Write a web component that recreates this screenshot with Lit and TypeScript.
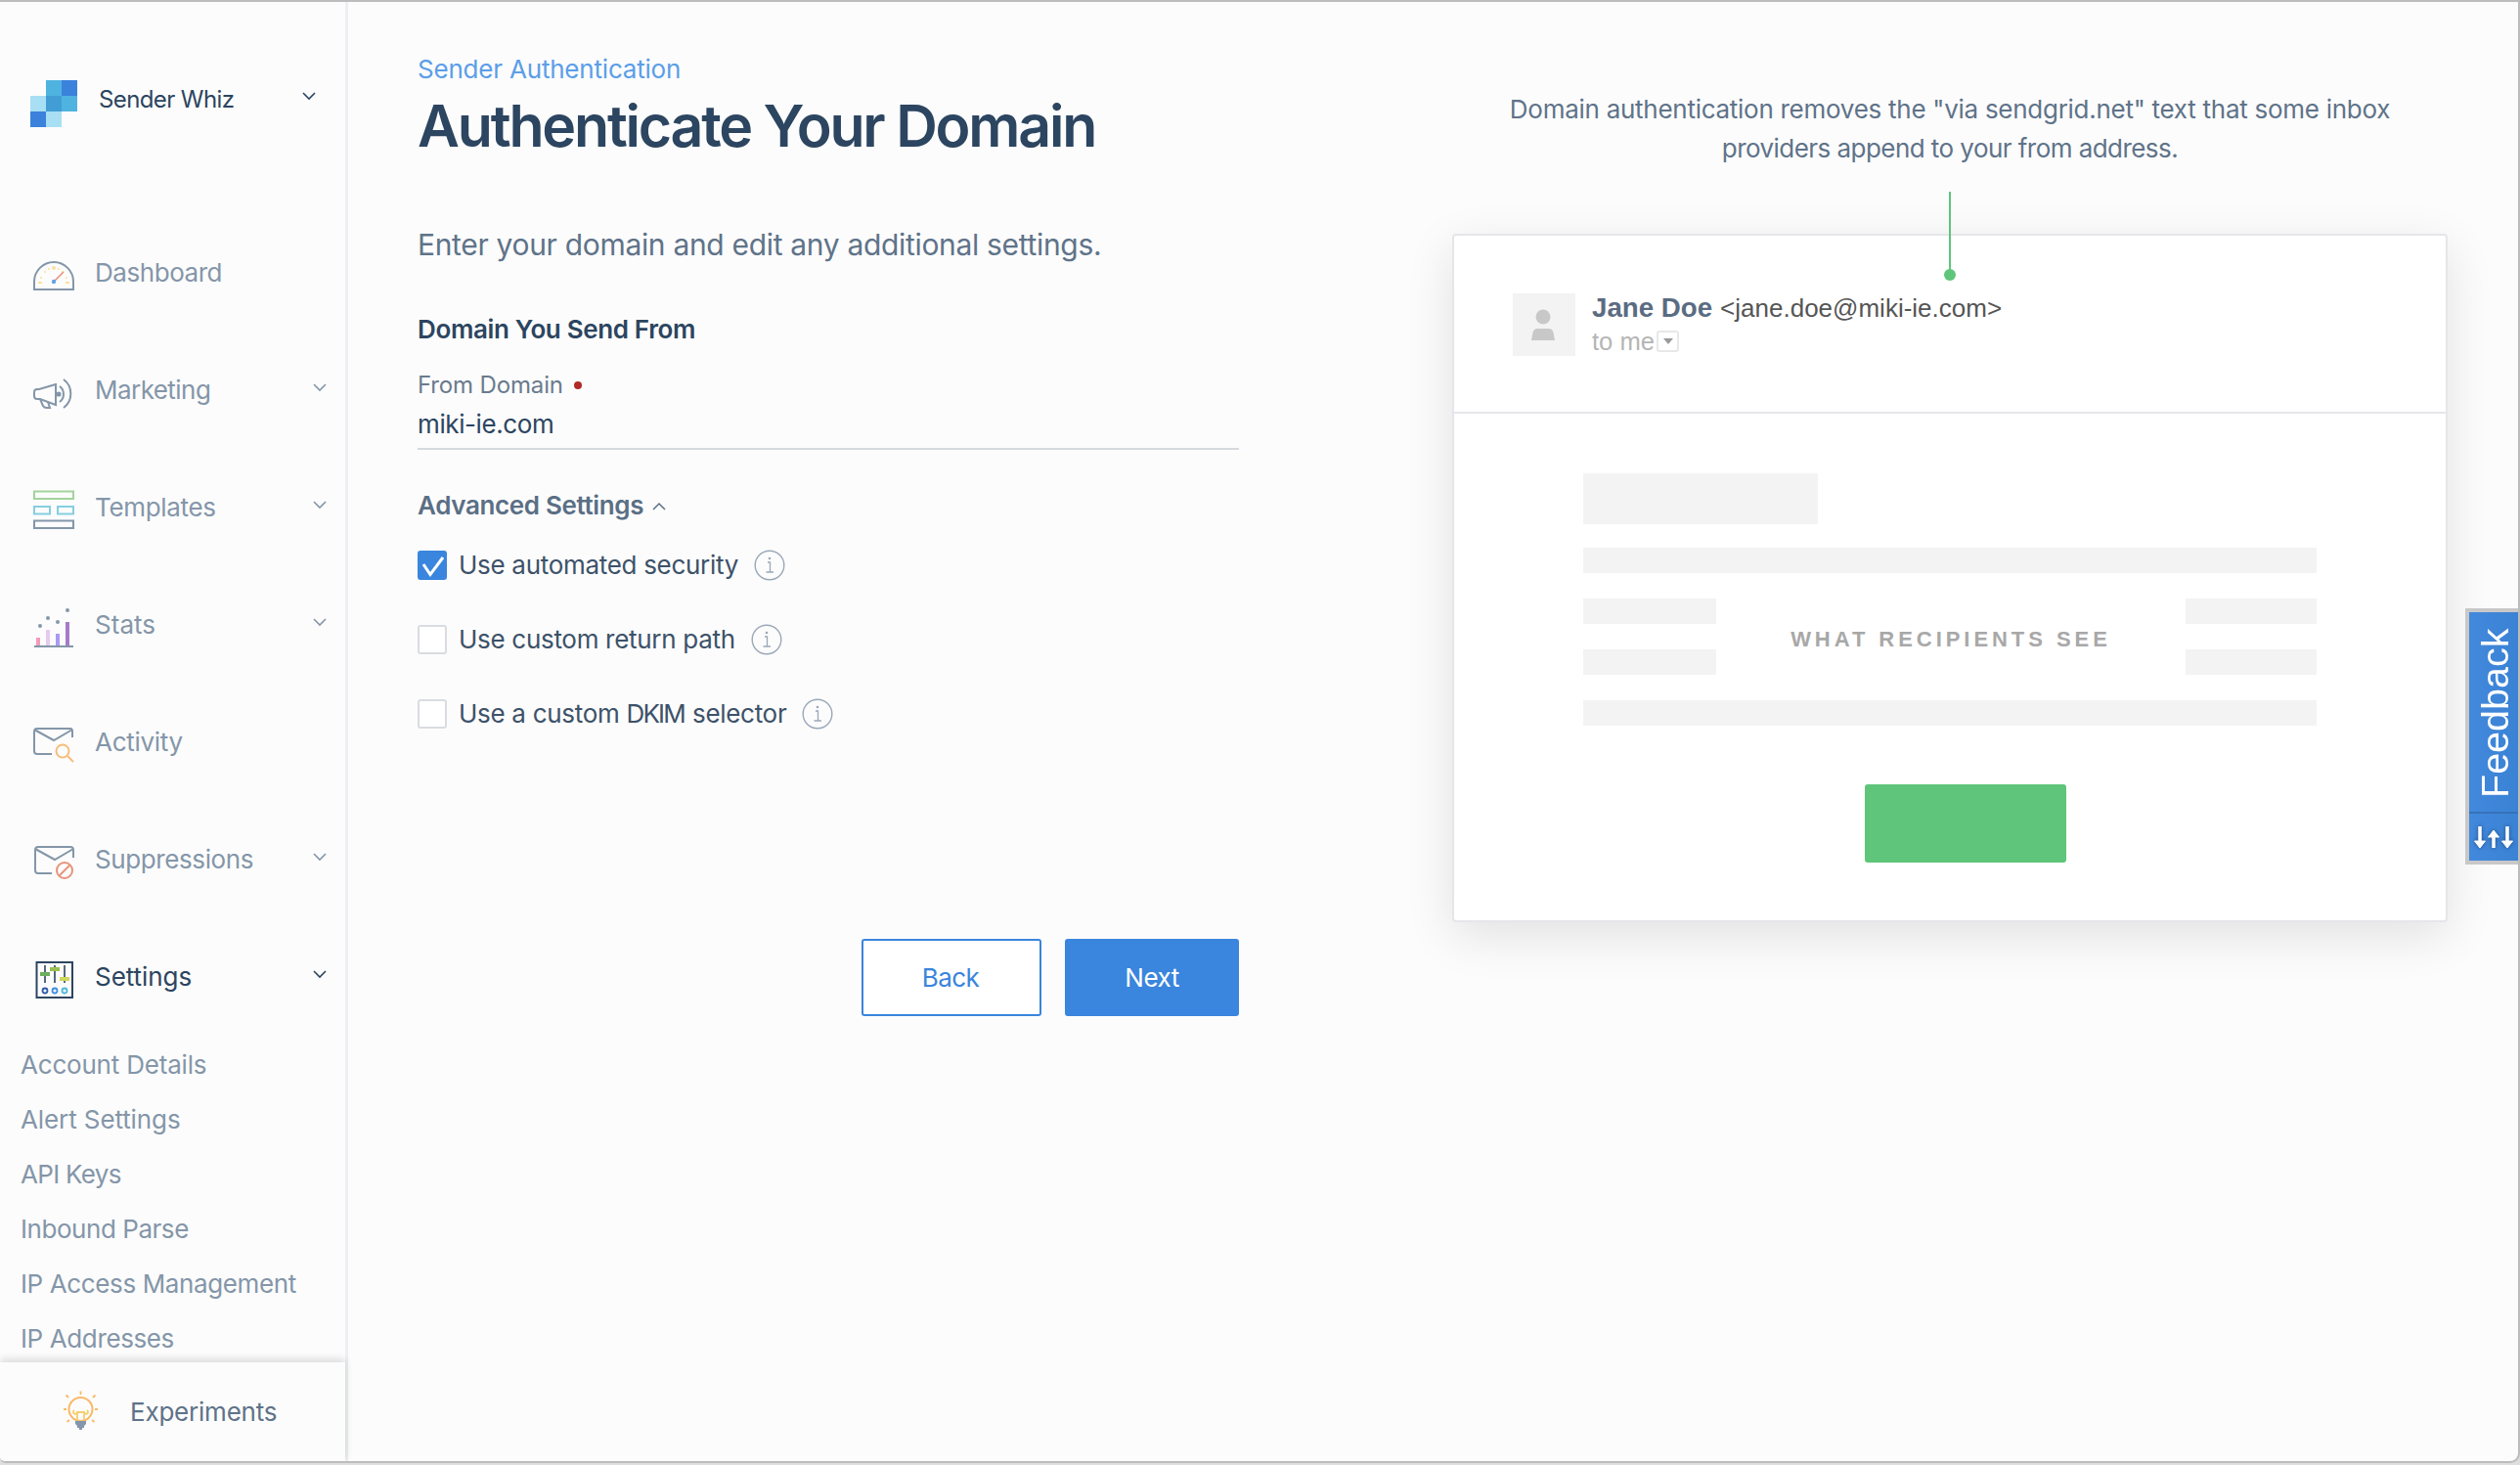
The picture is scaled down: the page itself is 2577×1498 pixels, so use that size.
import { LitElement, html, css, svg } from "lit";
import { customElement } from "lit/decorators.js";

const chev = html`<svg class="chev" viewBox="0 0 14 9"><path d="M1 1l6 6 6-6" fill="none" stroke="currentColor" stroke-width="1.6"/></svg>`;
const G = "#8496a9";

const icons: Record<string, unknown> = {
  dash: svg`<svg viewBox="33 254 44 50" class="ic">
    <path d="M35 296v-8a20 20 0 0 1 40 0v8z" fill="none" stroke="${G}" stroke-width="2"/>
    <g fill="#fbe29a"><circle cx="55" cy="274" r="2"/><circle cx="46" cy="278" r="1"/><circle cx="64" cy="278" r="1"/><circle cx="50" cy="275" r="1"/><circle cx="60" cy="275" r="1"/><circle cx="42" cy="284" r="1"/><circle cx="68" cy="284" r="1"/><rect x="39" y="288" width="4" height="2"/><rect x="67" y="288" width="4" height="2"/></g>
    <path d="M55 288l10-10" stroke="#e8937c" stroke-width="1.6"/><circle cx="55" cy="288" r="2.2" fill="#64a4e4"/></svg>`,
  mkt: svg`<svg viewBox="33 374 44 50" class="ic"><g fill="none" stroke="${G}" stroke-width="2">
    <path d="M57 393l-17 5h-2a3 3 0 0 0-3 3v4a3 3 0 0 0 3 3h3l16 6z"/><path d="M41 408l3 7q1 2 4 2h3l-2-6"/>
    <path d="M61 395a10 10 0 0 1 0 16"/><path d="M65 388a18 18 0 0 1 0 29"/></g><circle cx="60" cy="403" r="2.6" fill="${G}"/></svg>`,
  tpl: svg`<svg viewBox="33 495 44 50" class="ic"><g fill="none" stroke-width="2">
    <rect x="35" y="503.500" width="40" height="7.500" stroke="#a3d39c"/>
    <rect x="35" y="519" width="16" height="7.500" stroke="#86cfe0"/><rect x="59" y="519" width="16" height="7.500" stroke="#86cfe0"/>
    <rect x="35" y="533.500" width="40" height="7.500" stroke="${G}"/></g></svg>`,
  stats: svg`<svg viewBox="33 614 44 50" class="ic">
    <rect x="37" y="652" width="4" height="9" fill="#f59ab8"/><rect x="47" y="644" width="4" height="17" fill="#e6c9ef"/><rect x="57" y="648" width="4" height="13" fill="#a99af5"/><rect x="67" y="636" width="4" height="25" fill="#a67ac8"/>
    <path d="M35 661h40" stroke="${G}" stroke-width="2"/>
    <g fill="${G}"><circle cx="41" cy="640" r="2"/><circle cx="49" cy="632" r="2"/><circle cx="59" cy="636" r="2"/><circle cx="69" cy="624" r="2"/></g></svg>`,
  act: svg`<svg viewBox="33 734 44 50" class="ic"><g fill="none">
    <path d="M53 771H38q-3 0-3-3v-20q0-3 3-3h34q2 0 2 3v6M35 746l20 11 19-11" stroke="${G}" stroke-width="2"/>
    <circle cx="64" cy="768" r="6.500" stroke="#f7bd7c" stroke-width="2"/><path d="M69 773l6 6" stroke="#f7bd7c" stroke-width="2"/></g></svg>`,
  sup: svg`<svg viewBox="33 854 44 50" class="ic"><g fill="none">
    <path d="M53 893H39q-3 0-3-3v-21q0-3 3-3h33q3 0 3 3v8M36 868l20 11 19-11" stroke="${G}" stroke-width="2"/>
    <circle cx="66" cy="890" r="8" stroke="#e8937c" stroke-width="2"/><path d="M60.500 895.500l11-11" stroke="#e8937c" stroke-width="2"/></g></svg>`,
  set: svg`<svg viewBox="33 974 44 50" class="ic">
    <rect x="37.500" y="984" width="36.500" height="36" fill="none" stroke="#2c4560" stroke-width="2"/>
    <path d="M46 987v18M56 987v18M66 987v18" stroke="#2c4560" stroke-width="1.600"/>
    <rect x="41" y="994" width="10" height="4" fill="#6fae5c"/><rect x="51" y="989" width="10" height="4" fill="#97bf4e"/><rect x="61" y="999" width="10" height="4" fill="#cfd85a"/>
    <circle cx="46" cy="1013" r="2.500" fill="none" stroke="#2f5aa8" stroke-width="1.800"/><circle cx="56" cy="1013" r="2.500" fill="none" stroke="#3d8fe0" stroke-width="1.800"/><circle cx="66" cy="1013" r="2.500" fill="none" stroke="#4fb8d8" stroke-width="1.800"/></svg>`,
};

const bulb = svg`<svg class="bulb" viewBox="64 1419 37 43"><g fill="none">
  <circle cx="82.500" cy="1438" r="12" stroke="#f8b968" stroke-width="2"/>
  <path d="M82.500 1423v-3.500M70 1426l-2.500-2.500M95 1426l2.500-2.500M65 1438h3M97 1438h3M71 1449l-2.500 2M94 1449l2.500 2" stroke="#f8b968" stroke-width="1.800"/>
  <path d="M79 1449v-8h7v8M79 1441a2 2 0 1 1-3-2M86 1441a2 2 0 1 0 3-2" stroke="#f6cf6d" stroke-width="1.800"/></g>
  <path d="M77 1450h11v3l-2 2v2h-2v2h-3v-2h-2v-2l-2-2z" fill="${G}"/></svg>`;

const info = html`<svg class="info" viewBox="0 0 32 32"><circle cx="16" cy="16" r="14.800" fill="none" stroke="#9aa8b8" stroke-width="1.400"/><circle cx="16" cy="9" r="1.300" fill="#9aa8b8"/><path d="M14 13h2.500v10M12.500 23h7.500" fill="none" stroke="#9aa8b8" stroke-width="1.300"/></svg>`;

@customElement("app-root")
export class AppRoot extends LitElement {
  static styles = css`
    :host { display: block; width: 2577px; height: 1498px; background: #dedede; font-family: Inter, "Liberation Sans", sans-serif; overflow: hidden; }
    .win { position: relative; display: flex; height: 1496px; width: 2577px; box-sizing: border-box; background: #fcfcfc; border-top: 2px solid #bcbcbc; border-right: 2px solid #bcbcbc; border-bottom: 2px solid #bcbcbc; border-radius: 0 0 10px 6px; overflow: hidden; }
    .side { width: 356px; flex: none; box-sizing: border-box; border-right: 3px solid #edeff3; display: flex; flex-direction: column; }
    .head { height: 217px; flex: none; box-sizing: border-box; padding: 80px 30px 0 31px; display: flex; align-items: flex-start; color: #2c4560; }
    .logo { width: 48px; height: 48px; display: grid; grid-template-columns: repeat(3, 16px); grid-auto-rows: 16px; flex: none; }
    .name { margin: 3px 0 0 22px; font-size: 24px; line-height: 34px; letter-spacing: -0.6px; }
    .chev { width: 14px; height: 9px; display: block; }
    .head .chev { margin: 12px 0 0 auto; }
    .scroll { flex: 1; overflow: hidden; }
    .item { height: 120px; display: flex; align-items: center; padding: 0 19px 0 33px; color: #8496a9; font-size: 26px; gap: 20px; }
    .item span { margin-bottom: 1px; }
    .item.on { color: #2c4560; }
    .item .chev { margin: 0 0 6px auto; }
    .ic { width: 44px; height: 50px; flex: none; }
    .subs { padding-top: 1px; }
    .sub { height: 56px; display: flex; align-items: center; padding-left: 21px; font-size: 26px; color: #8496a9; }
    .foot { height: 101px; flex: none; display: flex; align-items: center; padding-left: 64px; gap: 32px; font-size: 26px; letter-spacing: -0.22px; color: #5f7389; background: #fcfcfc; box-shadow: 0 -3px 8px rgba(0,0,0,.14); position: relative; }
    .bulb { width: 37px; height: 43px; flex: none; }
    .main { flex: 1; display: flex; min-width: 0; padding-left: 71px; }
    .left { width: 840px; flex: none; padding-top: 54px; box-sizing: border-box; }
    .eyebrow { font-size: 26px; line-height: 30px; letter-spacing: -0.2px; color: #5b9ee9; }
    .title { margin: 8px 0 0; font-size: 59px; line-height: 70px; letter-spacing: -2.2px; font-weight: 600; color: #2c4560; }
    .lead { margin: 66px 0 0; font-size: 30px; line-height: 40px; letter-spacing: -0.32px; color: #5f7389; }
    .sec { margin: 52px 0 0; font-size: 26px; line-height: 30px; letter-spacing: -0.35px; font-weight: 600; color: #2c4560; }
    .lab { margin-top: 27px; font-size: 24px; line-height: 30px; letter-spacing: -0.15px; color: #6a7b8e; display: flex; align-items: center; gap: 11px; }
    .req { width: 8px; height: 8px; border-radius: 50%; background: #b02a2a; }
    .val { font-size: 26px; line-height: 34px; letter-spacing: -0.4px; padding: 8px 0 7px; color: #2c4560; border-bottom: 2px solid #d5d9de; }
    .adv { margin-top: 42px; font-size: 26px; line-height: 30px; letter-spacing: -0.36px; font-weight: 600; color: #5a6f85; display: flex; align-items: center; gap: 9px; }
    .adv svg { width: 14px; height: 9px; }
    .opts { margin-top: 31px; display: flex; flex-direction: column; gap: 46px; }
    .opt { display: flex; align-items: center; height: 30px; font-size: 26px; letter-spacing: -0.3px; color: #3d5269; }
    .opt .txt { margin-bottom: 2px; }
    .opt .caps { letter-spacing: -1.8px; margin-right: 1px; }
    .box { width: 30px; height: 30px; box-sizing: border-box; border: 2px solid #d9dce1; border-radius: 3px; margin-right: 12px; background: #fff; flex: none; }
    .box.on { background: #3a85dd; border-color: #3a85dd; }
    .box svg { display: block; margin: -2px; width: 30px; height: 30px; }
    .info { width: 32px; height: 32px; margin-left: 16px; }
    .btns { display: flex; justify-content: flex-end; gap: 24px; margin-top: 215px; }
    .btn { height: 79px; box-sizing: border-box; display: flex; align-items: center; justify-content: center; border-radius: 3px; font-size: 26px; letter-spacing: -0.5px; border: 2px solid #3a85dd; }
    .back { width: 184px; color: #3a85dd; background: #fff; padding-right: 2px; }
    .next { width: 178px; color: #fff; background: #3a85dd; }
    .right { width: 1018px; flex: none; margin-left: 218px; padding-top: 90px; }
    .note { margin: 0; text-align: center; font-size: 26px; line-height: 40px; letter-spacing: -0.27px; color: #5f7389; }
    .note span { letter-spacing: -0.55px; }
    .card { position: relative; margin-top: 67px; height: 704px; box-sizing: border-box; background: #fff; border: 2px solid #e6e6ea; border-radius: 4px; box-shadow: 0 14px 50px rgba(0,0,0,.11); }
    .pin { position: absolute; left: 506px; top: -45px; width: 2px; height: 85px; background: #5ec57a; }
    .pin::after { content: ""; position: absolute; left: -5px; bottom: -6px; width: 12px; height: 12px; border-radius: 50%; background: #5ec57a; }
    .mail { height: 182px; box-sizing: border-box; border-bottom: 2px solid #e6e6ea; padding: 59px 0 0 60px; display: flex; gap: 17px; font-family: "Liberation Sans", Arial, sans-serif; }
    .av { width: 64px; height: 64px; background: #f3f3f3; flex: none; }
    .av svg { width: 64px; height: 64px; display: block; }
    .who { font-size: 26px; line-height: 30px; color: #555; }
    .who b { font-size: 27.700px; color: #5a6c82; margin-right: 8px; }
    .tome { display: flex; align-items: center; margin-top: 6px; font-size: 25.600px; line-height: 26px; color: #b5b5b5; gap: 2px; }
    .dd { width: 23px; height: 22px; box-sizing: border-box; border: 2px solid #e8e8e8; border-radius: 3px; display: flex; align-items: center; justify-content: center; }
    .dd::after { content: ""; border: 5px solid transparent; border-top: 6px solid #9a9a9a; border-bottom: 0; }
    .body { padding: 61px 132px 0 132px; }
    .bar { background: #f3f3f3; height: 26px; }
    .b1 { width: 240px; height: 52px; margin-bottom: 24px; }
    .midgrid { display: grid; grid-template-columns: 136px 1fr 134px; grid-auto-rows: 26px; row-gap: 26px; margin: 26px 0; align-items: center; }
    .see { grid-column: 2; grid-row: 1 / span 2; padding-top: 6px; text-align: center; font: 700 22px "Liberation Sans", Arial, sans-serif; letter-spacing: 3.950px; color: #a8a8a8; }
    .mid2 { grid-column: 3; grid-row: 1; }
    .cta { width: 206px; height: 80px; margin: 60px 0 0 288px; background: #5ec57a; border-radius: 3px; }
    .fb { position: absolute; right: 0; top: 620px; width: 54px; height: 262px; box-sizing: border-box; border: 4px solid #c8c8c8; border-right: 0; background: linear-gradient(90deg, #4289dd, #3a82d4); display: flex; flex-direction: column; align-items: center; color: #fff; }
    .fbt { box-sizing: border-box; writing-mode: vertical-rl; transform: rotate(180deg); font: 400 39.500px/50px "Liberation Sans", Arial, sans-serif; height: 204px; margin-left: 2px; padding-top: 14px; }
    .fbi { flex: 1; width: 100%; border-top: 2px solid #3672b8; display: flex; align-items: center; justify-content: center; }
    .fbi svg { width: 42px; height: 26px; filter: drop-shadow(0 0 2px rgba(20,50,100,.7)); }
  `;

  render() {
    const nav = [["dash", "Dashboard", 0, -0.45], ["mkt", "Marketing", 1, -0.55], ["tpl", "Templates", 1, -0.33], ["stats", "Stats", 1, 0.05], ["act", "Activity", 0, -0.3], ["sup", "Suppressions", 1, -0.4], ["set", "Settings", 1, -0.05]] as [string, string, number, number][];
    const subs = [["Account Details", -0.2], ["Alert Settings", -0.1], ["API Keys", -0.7], ["Inbound Parse", -0.45], ["IP Access Management", -0.38], ["IP Addresses", -0.38]] as [string, number][];
    const cells = ["", "#4fb3df", "#3a82dc", "#a8dff4", "#429dd5", "#4fb3df", "#3a82dc", "#a8dff4", ""];
    const opts = [html`Use automated security`, html`Use custom return path`, html`Use a custom <span class="caps">DKIM</span> selector`];
    return html`<div class="win">
      <aside class="side">
        <div class="head">
          <div class="logo">${cells.map((c) => html`<span style="background:${c || "transparent"}"></span>`)}</div>
          <div class="name">Sender Whiz</div>${chev}
        </div>
        <div class="scroll">
          ${nav.map(([k, t, c, ls]) => html`<div class="item ${k === "set" ? "on" : ""}">${icons[k]}<span style="letter-spacing:${ls}px">${t}</span>${c ? chev : ""}</div>`)}
          <div class="subs">${subs.map(([s, ls]) => html`<div class="sub" style="letter-spacing:${ls}px">${s}</div>`)}</div>
        </div>
        <div class="foot">${bulb}<span>Experiments</span></div>
      </aside>
      <main class="main">
        <section class="left">
          <div class="eyebrow">Sender Authentication</div>
          <h1 class="title">Authenticate Your Domain</h1>
          <p class="lead">Enter your domain and edit any additional settings.</p>
          <div class="sec">Domain You Send From</div>
          <div class="lab">From Domain <span class="req"></span></div>
          <div class="val">miki-ie.com</div>
          <div class="adv">Advanced Settings <svg viewBox="0 0 14 9"><path d="M1 8l6-6 6 6" fill="none" stroke="#5a6f85" stroke-width="1.500"/></svg></div>
          <div class="opts">${opts.map((o, i) => html`<div class="opt"><span class="box ${i === 0 ? "on" : ""}">${i === 0 ? html`<svg viewBox="0 0 30 30"><path d="M6 14l7 10.500L26 7" fill="none" stroke="#fff" stroke-width="3"/></svg>` : ""}</span><span class="txt">${o}</span>${info}</div>`)}</div>
          <div class="btns"><div class="btn back">Back</div><div class="btn next">Next</div></div>
        </section>
        <section class="right">
          <p class="note">Domain authentication removes the "via sendgrid.net" text that some inbox<br><span>providers append to your from address.</span></p>
          <div class="card">
            <div class="pin"></div>
            <div class="mail">
              <div class="av"><svg viewBox="0 0 64 64"><ellipse cx="31" cy="24" rx="7.500" ry="7.500" fill="#c8c8c8"/><path d="M19 48l1.500-8q1-4 5-4h11q4 0 5 4l1.500 8z" fill="#c8c8c8"/></svg></div>
              <div><div class="who"><b>Jane Doe</b>&lt;jane.doe@miki-ie.com&gt;</div><div class="tome">to me<span class="dd"></span></div></div>
            </div>
            <div class="body">
              <div class="bar b1"></div>
              <div class="bar"></div>
              <div class="midgrid">
                <div class="bar"></div><div class="see">WHAT RECIPIENTS SEE</div><div class="bar mid2"></div>
                <div class="bar"></div><div class="bar"></div>
              </div>
              <div class="bar"></div>
              <div class="cta"></div>
            </div>
          </div>
        </section>
      </main>
      <div class="fb"><div class="fbt">Feedback</div><div class="fbi"><svg viewBox="0 0 42 26"><g fill="#fff" stroke="#fff" stroke-width="1"><path d="M7 2v16" stroke-width="3.500"/><path d="M1.500 17h11L7 24z"/><path d="M21 24V12" stroke-width="3.500"/><path d="M15.500 13h11L21 6z"/><path d="M35 2v16" stroke-width="3.500"/><path d="M29.500 17h11L35 24z"/></g></svg></div></div>
    </div>`;
  }
}
